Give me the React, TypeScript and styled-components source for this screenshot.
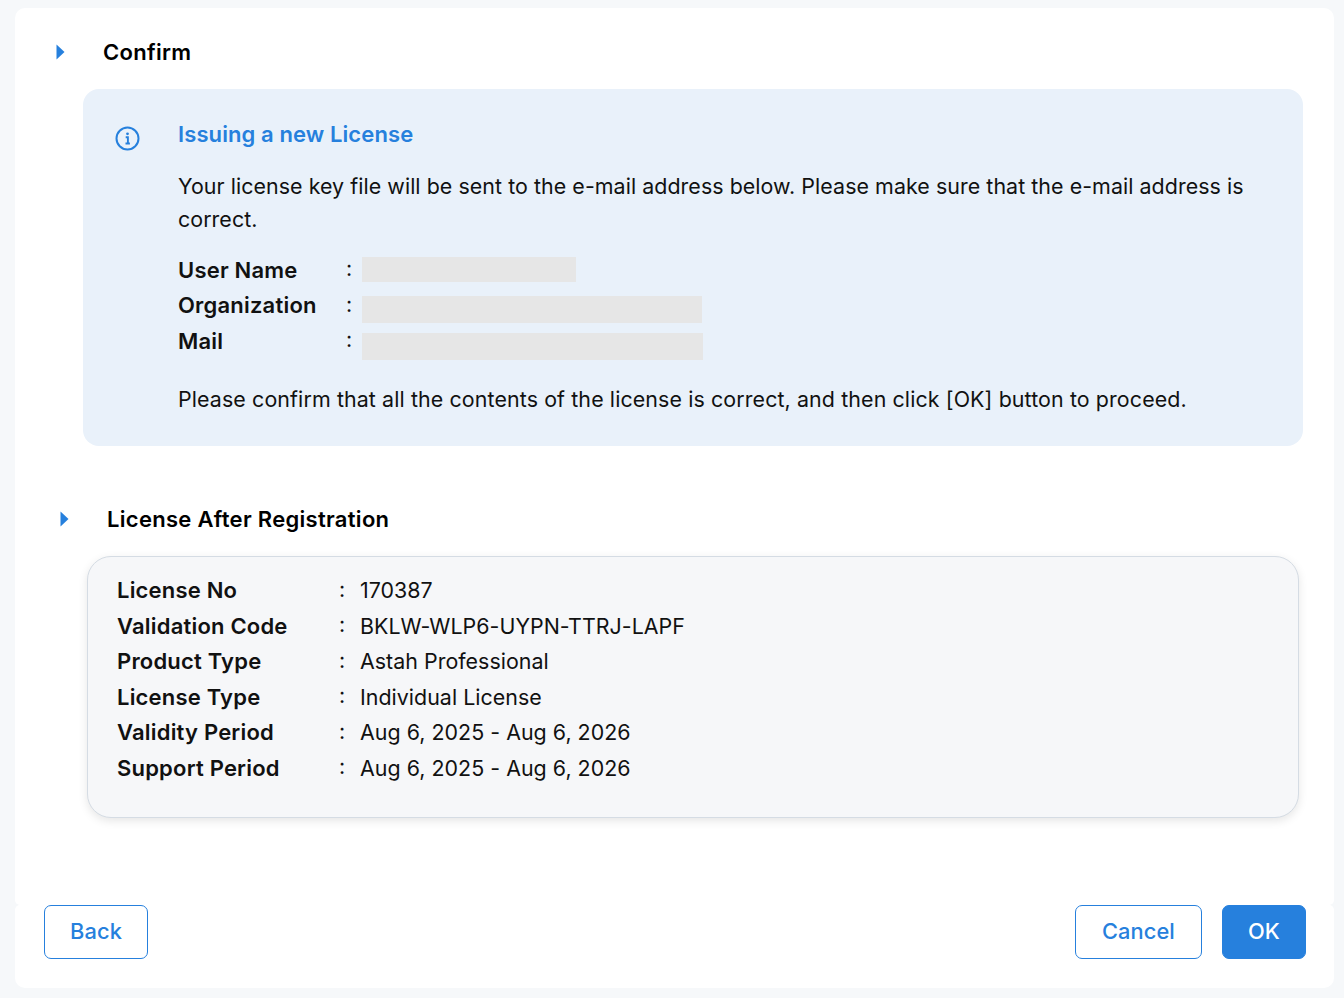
import React from "react";
import styled, { createGlobalStyle } from "styled-components";

const Global = createGlobalStyle`
  html, body { margin: 0; padding: 0; background: #f6f8fa; }
  body { font-family: Inter, "Liberation Sans", sans-serif; color: #111; }
`;
const Page = styled.div`
  width: 1344px; height: 998px; box-sizing: border-box; padding: 8px 10px 10px 15px;
  display: flex; flex-direction: column; overflow: hidden;
`;
const Main = styled.main`
  height: 897px; box-sizing: border-box; background: #fff; border-radius: 10px 10px 5px 5px;
  padding: 28px 31px 0 40px; display: flex; flex-direction: column;
`;
const Footer = styled.footer`
  height: 83px; background: #fff; border-radius: 5px 5px 10px 10px; box-sizing: border-box;
  padding: 0 28px 29px 29px; display: flex; align-items: flex-start; justify-content: space-between;
`;
const Heading = styled.h2<{ $indent?: number }>`
  margin: 0 0 0 ${p => p.$indent ?? 0}px; height: 32px; display: flex; align-items: center; gap: 38px;
  font-size: 22px; font-weight: 600; letter-spacing: 0.3px; color: #000;
`;
const SecondHeading = styled(Heading)`margin-top: 57px;`;
const Caret = styled.svg`width: 9px; height: 16px; fill: #2680dd; flex: none; margin: -1px 0 0 1px;`;
const Notice = styled.section`
  margin: 21px 0 0 28px; width: 1220px; height: 357px; box-sizing: border-box;
  background: #e9f1fa; border-radius: 16px; padding: 29px 32px 0; display: flex; gap: 38px;
`;
const InfoIcon = styled.svg`width: 25px; height: 25px; flex: none; margin-top: 8px;`;
const NoticeBody = styled.div`flex: 1; font-size: 21.4px; line-height: 33px; letter-spacing: 0.11px;`;
const NoticeTitle = styled.h3`
  margin: 0 0 19px; font-size: 22px; line-height: 33px; font-weight: 600; color: #2680dd; letter-spacing: 0.1px;
`;
const Para = styled.p<{ $spacing?: number }>`
  margin: 0; letter-spacing: ${p => p.$spacing ?? 0.11}px;
`;
const NoticeFields = styled.dl`
  margin: 16.7px 0 24.3px; display: grid; grid-template-columns: 168px 16px 1fr;
  grid-auto-rows: 35.5px; align-items: center;
`;
const Label = styled.dt`font-size: 22px; font-weight: 600; line-height: 33px; letter-spacing: 0.2px;`;
const Colon = styled.span`line-height: 33px; margin-top: -3px; margin-left: -1px; padding-left: 1px;`;
const Redacted = styled.dd<{ $w: number; $h: number; $shift: number }>`
  margin: ${p => p.$shift}px 0 0; width: ${p => p.$w}px; height: ${p => p.$h}px; background: #e6e6e6;
`;
const Summary = styled.section`
  margin: 21px 0 0 32px; width: 1212px; height: 262px; box-sizing: border-box;
  background: #f6f7f9; border: 1px solid #d5dce4; border-radius: 24px;
  box-shadow: 0 3px 10px rgba(0,0,0,.1); padding: 16px 29px 0;
  display: grid; grid-template-columns: 222px 21px 1fr; grid-auto-rows: 35.5px; align-items: center;
  font-size: 21.4px;
`;
const Value = styled.span`line-height: 33px; letter-spacing: 0.03px;`;
const Button = styled.button<{ $primary?: boolean; $w: number }>`
  width: ${p => p.$w}px; height: 54px; border-radius: 7px; border: 1px solid #2680dd;
  background: ${p => p.$primary ? "#2680dd" : "#fff"}; color: ${p => p.$primary ? "#fff" : "#2680dd"};
  font: 500 21.8px Inter, "Liberation Sans", sans-serif; letter-spacing: 0.1px; padding: 0 0 2px;
`;
const Actions = styled.div`display: flex; gap: 20px;`;

const rows = [
  ["License No", "170387"],
  ["Validation Code", "BKLW-WLP6-UYPN-TTRJ-LAPF"],
  ["Product Type", "Astah Professional"],
  ["License Type", "Individual License"],
  ["Validity Period", "Aug 6, 2025 - Aug 6, 2026"],
  ["Support Period", "Aug 6, 2025 - Aug 6, 2026"],
];
const Arrow = () => <Caret viewBox="0 0 9 16"><path d="M.5.6 8.5 8 .5 15.4z" /></Caret>;

function Section() {
  return (
    <>
      <SecondHeading $indent={4}><Arrow />License After Registration</SecondHeading>
      <Summary>
        {rows.map(([k, v]) => (
          <React.Fragment key={k}>
            <Label>{k}</Label><Colon>:</Colon><Value>{v}</Value>
          </React.Fragment>
        ))}
      </Summary>
    </>
  );
}

export default function App() {
  return (
    <Page>
      <Global />
      <Main>
        <Heading><Arrow />Confirm</Heading>
        <Notice>
          <InfoIcon viewBox="0 0 25 25" fill="none" stroke="#2680dd">
            <circle cx="12.5" cy="12.5" r="11" strokeWidth="2" />
            <path d="M10.7 11.3h2.2v6M10.5 17.5h4.4" strokeWidth="1.9" />
            <circle cx="12.5" cy="7.8" r="1.4" fill="#2680dd" stroke="none" />
          </InfoIcon>
          <NoticeBody>
            <NoticeTitle>Issuing a new License</NoticeTitle>
            <Para $spacing={0.06}>Your license key file will be sent to the e-mail address below. Please make sure that the e-mail address is correct.</Para>
            <NoticeFields>
              <Label>User Name</Label><Colon>:</Colon><Redacted $w={214} $h={25} $shift={-2} />
              <Label>Organization</Label><Colon>:</Colon><Redacted $w={340} $h={27} $shift={7} />
              <Label>Mail</Label><Colon>:</Colon><Redacted $w={341} $h={27} $shift={10} />
            </NoticeFields>
            <Para>Please confirm that all the contents of the license is correct, and then click [OK] button to proceed.</Para>
          </NoticeBody>
        </Notice>
        <Section />
      </Main>
      <Footer>
        <Button $w={104}>Back</Button>
        <Actions>
          <Button $w={127}>Cancel</Button>
          <Button $primary $w={84}>OK</Button>
        </Actions>
      </Footer>
    </Page>
  );
}
